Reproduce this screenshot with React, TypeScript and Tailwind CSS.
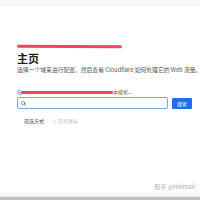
import { Search } from 'lucide-react';

export default function App() {
  return (
    <div className="relative w-[200px] h-[200px] bg-white overflow-hidden" style={{ fontFamily: '"Noto Sans CJK SC", "Noto Sans", sans-serif' }}>
      <div className="h-[5px] bg-[#f7f7f7] shadow-[0_1px_2px_rgba(0,0,0,0.06)]" />

      <div className="pl-[17px] pr-[4px] pt-[40px]">
        {/* redacted breadcrumb */}
        <div className="h-[3px] w-[105px] rounded-full bg-[#f2435f] rotate-[0.4deg]" />
        <h1 className="mt-[3px] text-[11px] leading-[14px] font-bold text-[#222]">主页</h1>
        <p className="mt-[1px] text-[5.8px] leading-[8px] text-[#555] whitespace-nowrap">
          选择一个域来进行配置，然后查看 Cloudflare 如何处理它的 Web 流量。
        </p>

        <div className="mt-[14px] flex items-center h-[8px]">
          <span className="text-[5px] text-[#555]">在</span>
          <div className="h-[3px] w-[92px] rounded-full bg-[#f2435f] -ml-[1px]" />
          <span className="text-[5px] text-[#555]">中搜索...</span>
        </div>

        <div className="mt-[1px] flex items-center gap-[4px]">
          <div className="flex items-center h-[12px] w-[151px] rounded-[2px] border border-[#7aa7e0] px-[3px]">
            <Search className="w-[5px] h-[5px] text-[#555]" strokeWidth={3} />
          </div>
          <button className="h-[11px] w-[20px] rounded-[1px] bg-[#1f6feb] text-white text-[5px] leading-[11px]">
            搜索
          </button>
        </div>

        <div className="mt-[8px] flex items-center gap-[8px] pl-[7px] text-[5px]">
          <span className="text-[#444]">筛选方式</span>
          <span className="text-[#bbb]">☆ 带有星标</span>
        </div>
      </div>

      <div className="absolute right-[5px] bottom-[9px] text-[6px] text-[#aaa]">知乎 @Hiemail</div>
      <div className="absolute left-0 right-0 bottom-0 h-[3px] bg-[#bdbdbd]" />
      <div className="absolute left-0 right-0 bottom-[3px] h-[6px] bg-gradient-to-t from-[#eee] to-white" />
    </div>
  );
}
